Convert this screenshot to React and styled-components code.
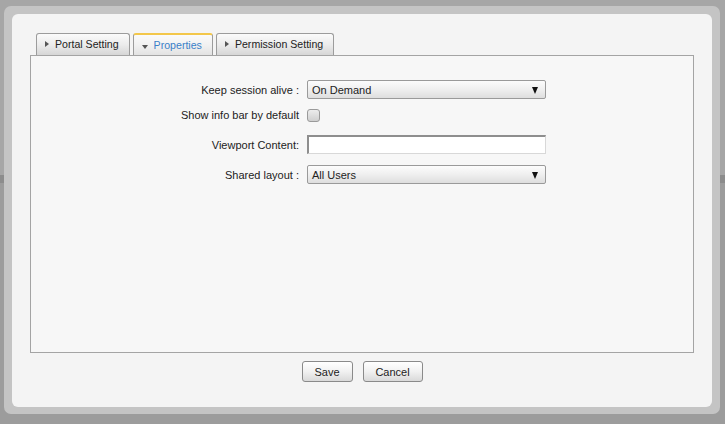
import styled, { createGlobalStyle } from 'styled-components';

const GlobalStyle = createGlobalStyle`
  html, body {
    margin: 0;
    padding: 0;
  }
  body {
    width: 725px;
    height: 424px;
    overflow: hidden;
    font-family: "Liberation Sans", Arial, sans-serif;
    font-size: 11px;
    color: #222;
    background: linear-gradient(
      to bottom,
      #a6a6a6 0,
      #a6a6a6 175px,
      #8c8c8c 175px,
      #8c8c8c 183px,
      #9c9c9c 183px
    );
  }
`;

const Frame = styled.div`
  box-sizing: border-box;
  margin: 6px 0 0 4px;
  width: 716px;
  height: 408px;
  padding: 8px 8px 7px;
  background: #c4c4c4;
  border-radius: 7px;
`;

const Panel = styled.div`
  box-sizing: border-box;
  height: 100%;
  padding: 19px 18px 0;
  background: #f4f4f4;
  border-radius: 6px;
  display: flex;
  flex-direction: column;
`;

const TabBar = styled.div`
  display: flex;
  gap: 3px;
  padding-left: 6px;
  height: 22px;
`;

const Tab = styled.div`
  box-sizing: border-box;
  height: 22px;
  display: flex;
  align-items: center;
  gap: 6px;
  padding: 0 10px 1px 8px;
  font-size: 10.6px;
  border: 1px solid #9c9c9c;
  border-bottom: none;
  border-radius: 3px 3px 0 0;
  border-top: ${(p) => (p.$active ? '2px solid #f3c74a' : '1px solid #9c9c9c')};
  background: ${(p) =>
    p.$active
      ? 'linear-gradient(to bottom, #fafafa 0%, #f1f1f1 50%, #e2e2e2 100%)'
      : 'linear-gradient(to bottom, #fbfbfb 0%, #ececec 50%, #d6d6d6 100%)'};
  color: ${(p) => (p.$active ? '#3a80c8' : '#222')};
  white-space: nowrap;
`;

const ArrowRight = styled.span`
  width: 0;
  height: 0;
  border-top: 3.5px solid transparent;
  border-bottom: 3.5px solid transparent;
  border-left: 4px solid #555;
`;

const ArrowDown = styled.span`
  width: 0;
  height: 0;
  margin-top: 4px;
  border-left: 3.5px solid transparent;
  border-right: 3.5px solid transparent;
  border-top: 4px solid #555;
`;

const Content = styled.div`
  box-sizing: border-box;
  height: 298px;
  border: 1px solid #a4a4a4;
  background: #f7f7f7;
  padding-top: 24px;
`;

const Row = styled.div`
  display: flex;
  align-items: center;
  gap: 8px;
  height: ${(p) => p.$h}px;
  margin-top: ${(p) => p.$top || 0}px;
`;

const Label = styled.label`
  width: 268px;
  text-align: right;
  white-space: nowrap;
`;

const Select = styled.div`
  box-sizing: border-box;
  width: 239px;
  height: 19px;
  display: flex;
  align-items: center;
  justify-content: space-between;
  padding: 1px 7px 0 4px;
  border: 1px solid #9a9a9a;
  border-radius: 2px;
  background: linear-gradient(to bottom, #fcfcfc 0%, #efefef 50%, #dedede 100%);
`;

const Caret = styled.span`
  width: 0;
  height: 0;
  border-left: 3.5px solid transparent;
  border-right: 3.5px solid transparent;
  border-top: 7px solid #111;
`;

const Checkbox = styled.span`
  box-sizing: border-box;
  width: 13px;
  height: 13px;
  border: 1px solid #9a9a9a;
  border-radius: 3px;
  background: linear-gradient(to bottom, #ececec, #cfcfcf);
`;

const TextInput = styled.div`
  box-sizing: border-box;
  width: 239px;
  height: 19px;
  background: #fff;
  border: 1px solid #d8d8d8;
  border-top: 2px solid #8e8e8e;
  border-left: 2px solid #8e8e8e;
`;

const Actions = styled.div`
  display: flex;
  justify-content: center;
  gap: 10px;
  margin-top: 8px;
`;

const Button = styled.button`
  box-sizing: border-box;
  height: 21px;
  min-width: ${(p) => p.$w}px;
  padding: 0 8px;
  font-family: "Liberation Sans", Arial, sans-serif;
  font-size: 11px;
  color: #222;
  border: 1px solid #8a8a8a;
  border-radius: 3px;
  background: linear-gradient(to bottom, #ffffff 0%, #f1f1f1 50%, #d9d9d9 100%);
`;

export default function App() {
  return (
    <>
      <GlobalStyle />
      <Frame>
        <Panel>
          <TabBar>
            <Tab>
              <ArrowRight />
              Portal Setting
            </Tab>
            <Tab $active>
              <ArrowDown />
              Properties
            </Tab>
            <Tab>
              <ArrowRight />
              Permission Setting
            </Tab>
          </TabBar>
          <Content>
            <Row $h={19}>
              <Label>Keep session alive :</Label>
              <Select>
                On Demand
                <Caret />
              </Select>
            </Row>
            <Row $h={20} $top={6}>
              <Label>Show info bar by default</Label>
              <Checkbox />
            </Row>
            <Row $h={19} $top={10}>
              <Label>Viewport Content:</Label>
              <TextInput />
            </Row>
            <Row $h={19} $top={11}>
              <Label>Shared layout :</Label>
              <Select>
                All Users
                <Caret />
              </Select>
            </Row>
          </Content>
          <Actions>
            <Button $w={51}>Save</Button>
            <Button $w={60}>Cancel</Button>
          </Actions>
        </Panel>
      </Frame>
    </>
  );
}
